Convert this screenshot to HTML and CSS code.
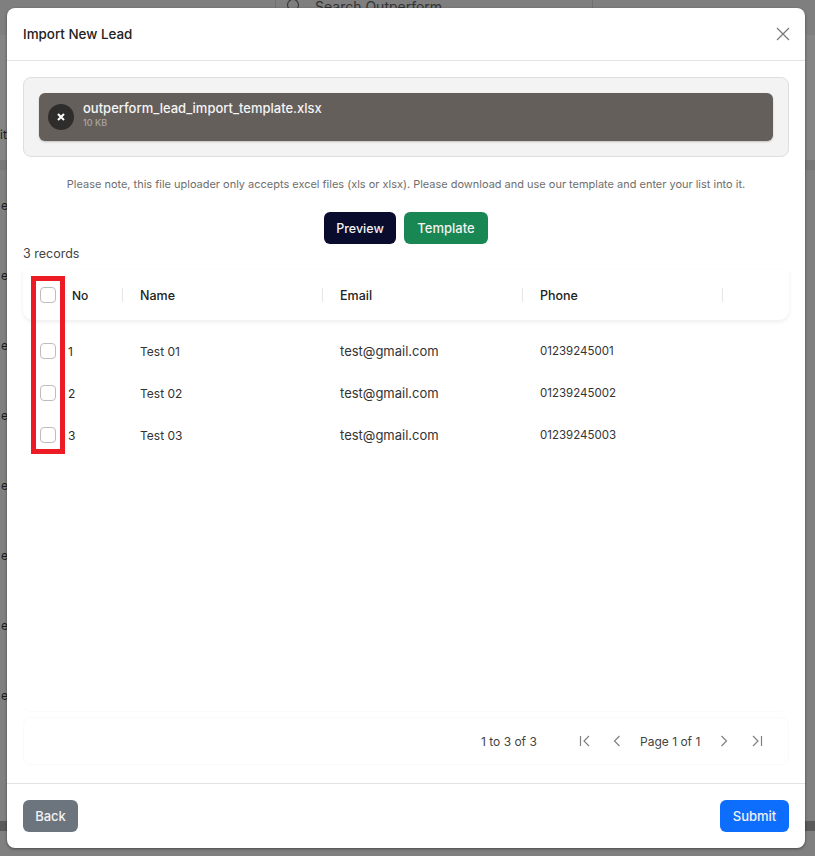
FILE: index.html
```html
<!DOCTYPE html>
<html lang="en">
<head>
<meta charset="utf-8">
<title>Import New Lead</title>
<link rel="stylesheet" href="styles.css">
</head>
<body>
<div class="behind">
  <div class="behind-top">
    <div class="behind-search">
      <svg class="behind-search-icon" width="16" height="16" viewBox="0 0 16 16"><circle cx="7" cy="7" r="5.5" fill="none" stroke="#3a3a3a" stroke-width="1.2"/></svg>
      <span>Search Outperform</span>
    </div>
  </div>
  <div class="behind-head">it</div>
  <div class="behind-band"></div>
  <div class="behind-row">e</div>
  <div class="behind-row">e</div>
  <div class="behind-row">e</div>
  <div class="behind-row">e</div>
  <div class="behind-row">e</div>
  <div class="behind-row">e</div>
  <div class="behind-row">e</div>
  <div class="behind-row">e</div>
  <div class="behind-foot"></div>
</div>

<main class="modal">
  <header class="modal-head">
    <h1 class="modal-title">Import New Lead</h1>
    <svg class="close-icon" width="14" height="14" viewBox="0 0 14 14"><path d="M1 1l12 12M13 1L1 13" fill="none" stroke="#777" stroke-width="1.2"/></svg>
  </header>

  <section class="modal-body">
    <div class="dropzone">
      <div class="file-item">
        <span class="file-remove">
          <svg width="10" height="10" viewBox="0 0 10 10"><path d="M2 2l6 6M8 2L2 8" fill="none" stroke="#fff" stroke-width="2"/></svg>
        </span>
        <div class="file-info">
          <div class="file-name">outperform_lead_import_template.xlsx</div>
          <div class="file-size">10 KB</div>
        </div>
      </div>
    </div>

    <p class="note">Please note, this file uploader only accepts excel files (xls or xlsx). Please download and use our template and enter your list into it.</p>

    <div class="actions">
      <button class="btn btn-navy">Preview</button>
      <button class="btn btn-green">Template</button>
    </div>

    <div class="count">3 records</div>

    <div class="grid">
      <div class="grid-head">
        <div class="cell cell-first"><span class="check"></span><span class="head-no">No</span></div>
        <div class="cell head-cell">Name</div>
        <div class="cell head-cell">Email</div>
        <div class="cell head-cell">Phone</div>
        <div class="cell head-end"></div>
      </div>
      <div class="grid-rows">
        <div class="grid-row">
          <div class="cell cell-first"><span class="check"></span><span class="row-no">1</span></div>
          <div class="cell body-cell">Test 01</div>
          <div class="cell body-cell cell-email">test@gmail.com</div>
          <div class="cell body-cell cell-phone">01239245001</div>
        </div>
        <div class="grid-row">
          <div class="cell cell-first"><span class="check"></span><span class="row-no">2</span></div>
          <div class="cell body-cell">Test 02</div>
          <div class="cell body-cell cell-email">test@gmail.com</div>
          <div class="cell body-cell cell-phone">01239245002</div>
        </div>
        <div class="grid-row">
          <div class="cell cell-first"><span class="check"></span><span class="row-no">3</span></div>
          <div class="cell body-cell">Test 03</div>
          <div class="cell body-cell cell-email">test@gmail.com</div>
          <div class="cell body-cell cell-phone">01239245003</div>
        </div>
      </div>
      <div class="highlight"></div>
    </div>

    <div class="pager">
      <span class="pager-count">1 to 3 of 3</span>
      <svg class="pg pg-first" width="12" height="12" viewBox="0 0 12 12"><path d="M1.500 1v10M10 1L5 6l5 5" fill="none" stroke="#808080" stroke-width="1.200"/></svg>
      <svg class="pg pg-prev" width="12" height="12" viewBox="0 0 12 12"><path d="M8.500 1L3.500 6l5 5" fill="none" stroke="#808080" stroke-width="1.200"/></svg>
      <span class="pager-page">Page 1 of 1</span>
      <svg class="pg pg-next" width="12" height="12" viewBox="0 0 12 12"><path d="M3.500 1l5 5-5 5" fill="none" stroke="#808080" stroke-width="1.200"/></svg>
      <svg class="pg pg-last" width="12" height="12" viewBox="0 0 12 12"><path d="M2 1l5 5-5 5M10.500 1v10" fill="none" stroke="#808080" stroke-width="1.200"/></svg>
    </div>
  </section>

  <footer class="modal-foot">
    <button class="btn btn-gray">Back</button>
    <button class="btn btn-blue">Submit</button>
  </footer>
</main>
</body>
</html>
```
FILE: styles.css
```css
* { box-sizing: border-box; }
html, body { margin: 0; height: 100%; overflow: hidden; }
body {
  position: relative;
  height: 856px;
  background: #808080;
  font-family: Inter, "Noto Sans", sans-serif;
  color: #333;
}

/* Dimmed page behind the dialog */
.behind {
  position: absolute;
  inset: 0;
  display: flex;
  flex-direction: column;
  color: #1c1c1c;
  font-size: 12px;
  overflow: hidden;
}
.behind-top { height: 35px; flex: none; background: #7f7f7f; display: flex; justify-content: center; }
.behind-search {
  width: 318px;
  height: 35px;
  margin-top: -19px;
  margin-left: 53px;
  padding-left: 10px;
  display: flex;
  align-items: flex-end;
  gap: 13px;
  border: 1px solid #707070;
  border-radius: 6px;
  color: #333;
  font-size: 14px;
}
.behind-search-icon { margin-bottom: 1px; }
.behind-head { height: 125px; flex: none; padding-top: 92px; background: #858585; line-height: 16px; }
.behind-band { height: 10px; flex: none; background: #787878; }
.behind-row { height: 70px; flex: none; margin-left: 1px; line-height: 16px; }
.behind-band + .behind-row { margin-top: 28px; }
.behind-foot { position: absolute; left: 0; right: 0; top: 821px; height: 10px; background: #5a5a5a; }

/* Dialog */
.modal {
  position: absolute;
  left: 7px;
  top: 8px;
  width: 798px;
  height: 840px;
  background: #fff;
  border-radius: 8px;
  box-shadow: 0 1px 3px rgba(0, 0, 0, .45);
  display: flex;
  flex-direction: column;
}
.modal-head {
  height: 53px;
  flex: none;
  border-bottom: 1px solid #e3e3e3;
  padding: 0 15px 0 16px;
  display: flex;
  align-items: center;
  justify-content: space-between;
}
.modal-title { margin: 0; font-size: 13.400px; font-weight: 500; color: #222; }
.modal-body {
  flex: 1;
  min-height: 0;
  padding: 16px 16px 0;
  display: flex;
  flex-direction: column;
}
.dropzone {
  height: 80px;
  flex: none;
  background: #f3f3f3;
  border: 1px solid #dedede;
  border-radius: 8px;
  padding: 15px;
}
.file-item {
  height: 48px;
  background: #655f5b;
  border-radius: 6px;
  box-shadow: 0 1px 2px rgba(0, 0, 0, .2);
  padding: 0 9px;
  display: flex;
  align-items: center;
  gap: 9px;
}
.file-remove {
  width: 26px;
  height: 26px;
  border-radius: 50%;
  background: #2f2d2b;
  display: flex;
  align-items: center;
  justify-content: center;
  flex: none;
}
.file-info { margin-top: -4px; }
.file-name { color: #f4f4f4; font-size: 13px; font-weight: 500; line-height: 15px; }
.file-size { color: #aaa6a3; font-size: 9px; font-weight: 500; line-height: 13px; }

.note {
  margin: 18px 0 0;
  font-size: 10.970px;
  line-height: 18px;
  text-align: center;
  color: #6e6e6e;
}
.actions {
  margin-top: 19px;
  display: flex;
  justify-content: center;
  gap: 8px;
}
.btn {
  height: 32px;
  border: 0;
  border-radius: 6px;
  color: #f2f2f2;
  font: 500 13px Inter, "Noto Sans", sans-serif;
  padding: 0;
}
.btn-navy { width: 72px; background: #0a0c2e; font-size: 12.500px; }
.btn-green { width: 84px; background: #198754; }
.btn-gray { width: 55px; background: #6c757d; }
.btn-blue { width: 69px; background: #0d6efd; }

.count { margin-top: 1px; height: 17px; font-size: 12.500px; line-height: 18px; color: #444; }

.grid {
  position: relative;
  margin-top: 8px;
  height: 442px;
  flex: none;
  border-radius: 0 0 8px 8px;
  border-bottom: 1px solid #fbfbfb;
}
.grid-head {
  height: 50px;
  border-radius: 0 0 10px 10px;
  background: #fff;
  box-shadow: 0 2px 4px rgba(0, 0, 0, .07);
  display: grid;
  grid-template-columns: 99px 200px 200px 200px 67px;
  align-items: center;
}
.grid-rows { padding-top: 10px; }
.grid-row {
  height: 42px;
  display: grid;
  grid-template-columns: 100px 200px 200px 200px;
  align-items: center;
}
.cell { font-size: 12px; display: flex; align-items: center; color: #2b2b2b; }
.cell-first { padding-left: 17px; }
.head-cell {
  height: 14px;
  padding-left: 17px;
  font-size: 12.500px;
  font-weight: 500;
  color: #222;
  border-left: 1px solid #e6e6e6;
}
.head-end { height: 14px; border-left: 1px solid #e6e6e6; }
.grid-head .cell-first { font-weight: 500; }
.body-cell { padding-left: 17px; color: #333; }
.cell-email { font-size: 13px; }
.cell-phone { font-size: 11.500px; }
.check {
  width: 16px;
  height: 16px;
  flex: none;
  background: #fff;
  border: 1px solid #bdbdbd;
  border-radius: 4px;
}
.head-no { margin-left: 16px; color: #222; }
.row-no { margin-left: 12px; }
.highlight {
  position: absolute;
  left: 8px;
  top: 6px;
  width: 34px;
  height: 178px;
  border: 5px solid #ed1c24;
  pointer-events: none;
}

.pager {
  margin-top: 5px;
  height: 48px;
  flex: none;
  border: 1px solid #fafafa;
  border-radius: 8px;
  display: flex;
  align-items: center;
  font-size: 12px;
  color: #444;
  padding-left: 457px;
}
.pg { flex: none; }
.pager-count { width: 98px; white-space: nowrap; }
.pg-prev { margin-left: 20px; }
.pager-page { width: 60px; margin-left: 17px; white-space: nowrap; }
.pg-next { margin-left: 18px; }
.pg-last { margin-left: 21px; }

.modal-foot {
  margin-top: auto;
  height: 65px;
  flex: none;
  border-top: 1px solid #e3e3e3;
  padding: 16px 16px 0;
  display: flex;
  justify-content: space-between;
  align-items: flex-start;
}
```
